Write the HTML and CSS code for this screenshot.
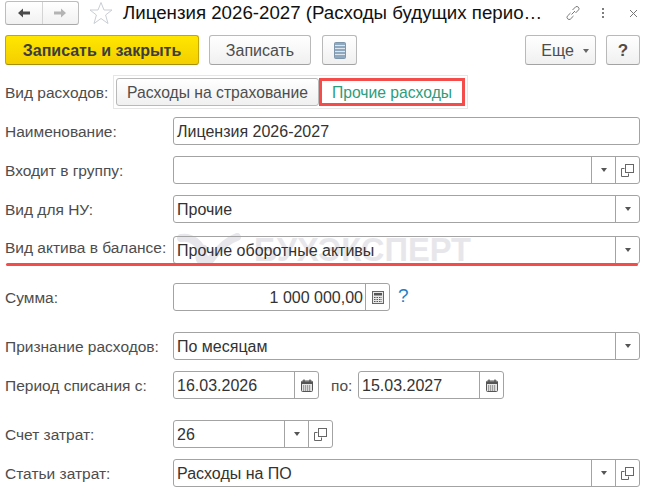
FILE: index.html
```html
<!DOCTYPE html>
<html lang="ru">
<head>
<meta charset="utf-8">
<title>Лицензия 2026-2027</title>
<link rel="stylesheet" href="styles.css">
</head>
<body>
<div class="page">
  <div class="watermark">
    <svg width="64" height="34" viewBox="0 0 64 34" fill="none" stroke="#e7e7eb" stroke-width="8" stroke-linecap="round" stroke-linejoin="round"><path d="M4 5C14 3 24 10 27 24 28 29 31 30 34 26 40 18 48 8 60 4"/><path d="M27 16C20 24 22 28 27 29"/></svg>
    <span>БУХЭКСПЕРТ</span>
  </div>

  <header class="titlebar">
    <div class="nav">
      <span class="nav-btn">
        <svg width="14" height="12" viewBox="0 0 14 12"><path d="M1 6 6 1.5V4.5H13V7.5H6V10.5Z" fill="#4a4a4a"/></svg>
      </span>
      <span class="nav-btn">
        <svg width="14" height="12" viewBox="0 0 14 12"><path d="M13 6 8 1.5V4.5H1V7.5H8V10.5Z" fill="#b4b4b4"/></svg>
      </span>
    </div>
    <svg class="star" width="24" height="24" viewBox="0 0 24 24"><path d="M12 1.5 15 9H23L16.6 14 19 22.5 12 17.5 5 22.5 7.4 14 1 9H9Z" fill="#fff" stroke="#c9ced3" stroke-width="1"/></svg>
    <h1 class="title">Лицензия 2026-2027 (Расходы будущих перио…</h1>
    <div class="win-icons">
      <svg width="16" height="16" viewBox="0 0 16 16" fill="none" stroke="#777" stroke-width="1"><path d="M6.5 9.5 10 6M5.5 8 2.3 11.2a2.2 2.2 0 0 0 3 3L8.5 11M7.5 5 10.7 1.8a2.2 2.2 0 0 1 3 3L10.5 8"/></svg>
      <svg width="4" height="12" viewBox="0 0 4 12" fill="#7d7d7d"><rect x="1" y="1" width="2" height="2"/><rect x="1" y="5" width="2" height="2"/><rect x="1" y="9" width="2" height="2"/></svg>
      <svg width="9" height="9" viewBox="0 0 9 9" stroke="#777" stroke-width="1"><path d="M1 1 8 8M8 1 1 8"/></svg>
    </div>
  </header>

  <div class="toolbar">
    <button class="btn btn-primary">Записать и закрыть</button>
    <button class="btn btn-save">Записать</button>
    <button class="btn btn-icon">
      <svg width="12" height="17" viewBox="0 0 12 17"><rect x="0.5" y="0.5" width="11" height="16" rx="1" fill="#8fa9c1" stroke="#7f97ad"/><path d="M1 3.5H11M1 6.5H11M1 9.5H11M1 12.5H11" stroke="#dfe7ee" stroke-width="1"/></svg>
    </button>
    <span class="spacer"></span>
    <button class="btn btn-more">Еще <i class="caret"></i></button>
    <button class="btn btn-help">?</button>
  </div>

  <div class="kind-row">
    <span class="label kind-label">Вид расходов:</span>
    <div class="switch">
      <span class="switch-off">Расходы на страхование</span>
      <span class="switch-on">Прочие расходы</span>
    </div>
  </div>

  <form class="form">
    <div class="row row-name">
      <span class="label">Наименование:</span>
      <div class="field grow"><span class="value">Лицензия 2026-2027</span></div>
    </div>
    <div class="row row-gap">
      <span class="label">Входит в группу:</span>
      <div class="field grow"><span class="value"></span><span class="cell"><i class="caret"></i></span><span class="cell"><svg class="open" width="13" height="13" viewBox="0 0 13 13" fill="none" stroke="#666"><path d="M3.5 4.5H.5V12.5H7.5V9.5"/><rect x="4.5" y="0.5" width="8" height="8"/></svg></span></div>
    </div>
    <div class="row row-gap">
      <span class="label">Вид для НУ:</span>
      <div class="field grow"><span class="value">Прочие</span><span class="cell"><i class="caret"></i></span></div>
    </div>
    <div class="row row-asset">
      <span class="label label-asset">Вид актива в балансе:</span>
      <div class="field grow field-cut"><span class="value">Прочие оборотные активы</span><span class="cell"><i class="caret"></i></span></div>
    </div>
    <div class="row row-sum">
      <span class="label">Сумма:</span>
      <div class="field w-sum"><span class="value right">1 000 000,00</span><span class="cell"><svg width="12" height="13" viewBox="0 0 12 13"><rect x=".5" y=".5" width="11" height="12" fill="#e8e8e8" stroke="#666"/><rect x="2" y="2" width="8" height="2.5" fill="#555"/><path d="M2 6.5H10M2 8.5H10M2 10.5H10" stroke="#555" stroke-dasharray="1.5 1"/></svg></span></div>
      <span class="hint">?</span>
    </div>
    <div class="row row-rec">
      <span class="label">Признание расходов:</span>
      <div class="field grow"><span class="value">По месяцам</span><span class="cell"><i class="caret"></i></span></div>
    </div>
    <div class="row row-gap">
      <span class="label">Период списания с:</span>
      <div class="field w-date"><span class="value">16.03.2026</span><span class="cell"><svg width="12" height="13" viewBox="0 0 12 13"><rect x=".5" y="2" width="11" height="10.5" rx="1" fill="#e6e6e6" stroke="#555"/><rect x="1" y="2.5" width="10" height="2.5" fill="#555"/><path d="M3 .5V3M9 .5V3" stroke="#555" stroke-width="1.4"/><path d="M2 7H10M2 9H10M2 11H10" stroke="#555" stroke-dasharray="1.2 .8"/></svg></span></div>
      <span class="label-to">по:</span>
      <div class="field w-date"><span class="value">15.03.2027</span><span class="cell"><svg width="12" height="13" viewBox="0 0 12 13"><rect x=".5" y="2" width="11" height="10.5" rx="1" fill="#e6e6e6" stroke="#555"/><rect x="1" y="2.5" width="10" height="2.5" fill="#555"/><path d="M3 .5V3M9 .5V3" stroke="#555" stroke-width="1.4"/><path d="M2 7H10M2 9H10M2 11H10" stroke="#555" stroke-dasharray="1.2 .8"/></svg></span></div>
    </div>
    <div class="row row-acc">
      <span class="label">Счет затрат:</span>
      <div class="field w-acc"><span class="value">26</span><span class="cell"><i class="caret"></i></span><span class="cell"><svg class="open" width="13" height="13" viewBox="0 0 13 13" fill="none" stroke="#666"><path d="M3.5 4.5H.5V12.5H7.5V9.5"/><rect x="4.5" y="0.5" width="8" height="8"/></svg></span></div>
    </div>
    <div class="row row-gap">
      <span class="label">Статьи затрат:</span>
      <div class="field grow"><span class="value">Расходы на ПО</span><span class="cell"><i class="caret"></i></span><span class="cell"><svg class="open" width="13" height="13" viewBox="0 0 13 13" fill="none" stroke="#666"><path d="M3.5 4.5H.5V12.5H7.5V9.5"/><rect x="4.5" y="0.5" width="8" height="8"/></svg></span></div>
    </div>
  </form>

  <div class="underline"></div>
</div>
</body>
</html>
```
FILE: styles.css
```css
* { box-sizing: border-box; }
html, body { margin: 0; padding: 0; background: #fff; }
body { font-family: "Liberation Sans", Arial, sans-serif; font-size: 16px; color: #333; }
.page { position: relative; isolation: isolate; width: 646px; height: 502px; overflow: hidden; padding: 1px 6px 0 5px; }

.titlebar { display: flex; align-items: center; height: 24px; }
.nav { display: flex; width: 74px; height: 24px; border: 1px solid #bdbdbd; border-bottom-color: #a8a8a8; border-radius: 3px; background: linear-gradient(#fff, #f1f1f1); }
.nav-btn { flex: 1; display: flex; align-items: center; justify-content: center; }
.nav-btn + .nav-btn { border-left: 1px solid #d4d4d4; }
.star { margin-left: 10px; }
.title { margin: 0 0 0 10px; width: 430px; font-size: 18.7px; font-weight: 400; color: #111; white-space: nowrap; }
.win-icons { display: flex; align-items: center; margin-left: 12px; }
.win-icons svg:nth-child(2) { margin-left: 20px; }
.win-icons svg:nth-child(3) { margin-left: 24px; }

.toolbar { display: flex; align-items: center; margin-top: 10px; height: 30px; }
.btn { height: 30px; padding: 1px 0 0; border: 1px solid #b9b9b9; border-bottom-color: #a3a3a3; border-radius: 3px; background: linear-gradient(#fff, #f0f0f0); font: inherit; color: #4d4d4d; display: flex; align-items: center; justify-content: center; }
.btn-primary { width: 194px; border-color: #c4a800; border-bottom-color: #a68f00; background: linear-gradient(#ffe600, #f4cf00); font-weight: 700; color: #3d3d3d; }
.btn-save { width: 102px; margin-left: 10px; }
.btn-icon { width: 35px; margin-left: 11px; padding-top: 0; }
.spacer { flex: 1; }
.btn-more { width: 71px; padding-left: 9px; }
.btn-more .caret { margin-left: 9px; border-top-color: #666; }
.btn-help { width: 34px; margin-left: 10px; font-weight: 700; font-size: 17px; }
.caret { display: inline-block; width: 0; height: 0; border-left: 3.5px solid transparent; border-right: 3.5px solid transparent; border-top: 4px solid #555; }

.kind-row { display: flex; align-items: center; margin-top: 10px; height: 34px; }
.label { flex: none; width: 168px; padding-top: 1px; font-size: 15.5px; color: #4d4d4d; white-space: nowrap; }
.kind-label { width: 108px; }
.switch { display: flex; align-items: center; height: 34px; padding: 0 2px; border: 1px solid #e6e6e6; font-size: 15.7px; }
.switch-off { width: 203px; height: 28px; padding-top: 1px; display: flex; align-items: center; justify-content: center; border: 1px solid #b9b9b9; border-radius: 3px; background: linear-gradient(#fff, #f0f0f0); color: #4d4d4d; }
.switch-on { width: 146px; height: 28px; padding-top: 1px; display: flex; align-items: center; justify-content: center; border: 3px solid #f44b4b; color: #2e9c7a; }

.form { display: block; }
.row { display: flex; align-items: center; height: 28px; }
.row-name { margin-top: 8px; }
.row-gap { margin-top: 11px; }
.row-asset { margin-top: 13px; }
.row-sum { margin-top: 19px; }
.row-rec { margin-top: 21px; }
.row-acc { margin-top: 21px; }
.label-asset { position: relative; top: -3px; }

.field { display: flex; height: 28px; border: 1px solid #a3a3a3; border-radius: 3px; background: #fff; }
.field-cut { background: transparent; }
.grow { width: 467px; }
.w-sum { width: 217px; }
.w-date { width: 146px; }
.w-acc { width: 160px; }
.value { flex: 1; min-width: 0; padding: 0 3px; line-height: 28px; color: #333; white-space: nowrap; }
.right { text-align: right; padding-right: 2px; }
.cell { flex: none; width: 24px; display: flex; align-items: center; justify-content: center; border-left: 1px solid #a3a3a3; }
.hint { margin-left: 8px; color: #1f7fc4; font-size: 19px; position: relative; top: -1px; }
.label-to { margin-left: 12px; width: 27px; padding-top: 1px; font-size: 15.5px; color: #4d4d4d; }

.watermark { position: absolute; left: 177px; top: 233px; z-index: -1; display: flex; align-items: center; gap: 13px; height: 34px; color: #e7e7eb; font-size: 32.7px; font-weight: 700; white-space: nowrap; }
.underline { position: absolute; left: 6px; top: 263px; width: 632px; height: 3px; background: #f44b4b; border-radius: 2px; }
```
